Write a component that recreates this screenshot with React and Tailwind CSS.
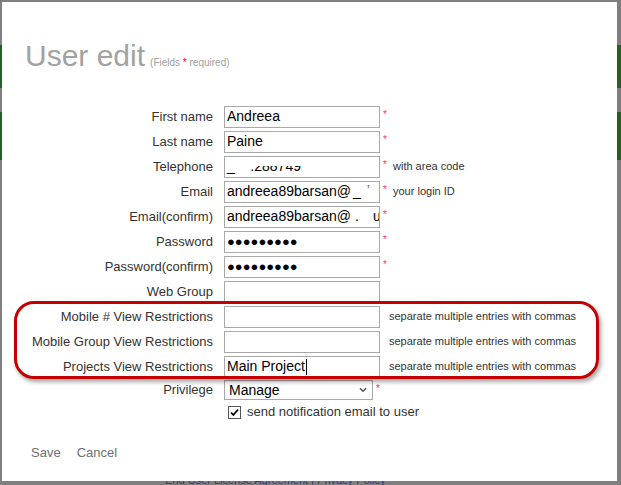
import React from 'react';

const font = { fontFamily: '"Liberation Sans", Arial, sans-serif' };

const Star = () => (
  <span className="ml-[3px] w-[4px] text-[10px] leading-none text-[#ef4069] self-center -mt-[3px]">*</span>
);

const Field = ({ children, required, hint, overlay }) => (
  <div className="flex items-center">
    <div className="relative w-[156px] h-[22px] border border-[#a9a9a9] bg-white px-[2px] flex items-center overflow-hidden text-[14px] text-black whitespace-nowrap">
      {children}
      {overlay}
    </div>
    {required && <Star />}
    {hint && (
      <span className={`${required ? 'ml-[6px]' : 'ml-[9px]'} text-[11px] text-[#333] whitespace-nowrap`}>{hint}</span>
    )}
  </div>
);

const Row = ({ label, h = 'h-[25px]', children }) => (
  <div className={`flex items-center ${h}`}>
    <div className="w-[211px] text-right text-[13px] text-[#333] whitespace-nowrap">{label}</div>
    <div className="ml-[11px]">{children}</div>
  </div>
);

const Dots = () => <span className="text-[13px]">●●●●●●●●●</span>;

const SideStrip = () => (
  <div className="flex flex-col">
    <div className="h-[43px]" />
    <div className="h-[43px] bg-[#245f24]" />
    <div className="h-[24px]" />
    <div className="h-[48px] bg-[#245f24]" />
  </div>
);

export default function App() {
  return (
    <div className="relative w-[621px] h-[485px] bg-[#7f7f7f] overflow-hidden flex flex-col" style={font}>
      <div className="h-[2px] shrink-0" />
      <div className="flex h-[479px] shrink-0">
        <div className="w-[2px]"><SideStrip /></div>
        <div className="w-[615px] bg-white flex flex-col">
          {/* Title */}
          <div className="mt-[39px] pl-[23px] flex items-baseline">
            <span className="text-[30px] leading-[30px] text-[#a2a2a2]">User edit</span>
            <span className="ml-[5px] text-[10px] text-[#a0a0a0]">
              (Fields <span className="text-[#e00]">*</span> required)
            </span>
          </div>

          {/* Form */}
          <div className="mt-[33px] flex flex-col">
            <Row label="First name"><Field required>Andreea</Field></Row>
            <Row label="Last name"><Field required>Paine</Field></Row>
            <Row label="Telephone">
              <Field
                required
                hint="with area code"
                overlay={<div className="absolute left-0 top-0 w-[150px] h-[9px] bg-white" />}
              >
                <span>_&nbsp;&nbsp;&nbsp;&nbsp;.288749</span>
              </Field>
            </Row>
            <Row label="Email">
              <Field required hint="your login ID">
                andreea89barsan@<span className="ml-[2px]">_</span>
                <span className="ml-[6px] text-[#666]">ʼ</span>
                <span className="ml-[8px] text-[#7a2020]">ı</span>
              </Field>
            </Row>
            <Row label="Email(confirm)">
              <Field required>
                andreea89barsan@<span className="ml-[4px]">.</span>
                <span className="ml-[14px]">ui</span>
              </Field>
            </Row>
            <Row label="Password"><Field required><Dots /></Field></Row>
            <Row label="Password(confirm)"><Field required><Dots /></Field></Row>
            <Row label="Web Group"><Field /></Row>
            <Row label="Mobile # View Restrictions">
              <Field hint="separate multiple entries with commas" />
            </Row>
            <Row label="Mobile Group View Restrictions">
              <Field hint="separate multiple entries with commas" />
            </Row>
            <Row label="Projects View Restrictions">
              <Field hint="separate multiple entries with commas">
                Main Project<span className="inline-block w-[1px] h-[16px] bg-black ml-[1px]" />
              </Field>
            </Row>
            <Row label="Privilege" h="h-[22px]">
              <div className="flex items-center">
                <div className="w-[149px] h-[20px] border border-[#a9a9a9] flex items-center justify-between pl-[4px] pr-[5px] text-[14px] text-black">
                  <span>Manage</span>
                  <svg width="8" height="6" viewBox="0 0 8 6">
                    <path d="M1 1.2L4 4.2L7 1.2" fill="none" stroke="#555" strokeWidth="1.6" />
                  </svg>
                </div>
                <Star />
              </div>
            </Row>
            <Row label="" h="h-[22px]">
              <div className="flex items-center pl-[4px]">
                <div className="w-[13px] h-[13px] border border-[#555] bg-white flex items-center justify-center">
                  <svg width="9" height="9" viewBox="0 0 9 9">
                    <path d="M1 4.5L3.4 7L8 1.5" fill="none" stroke="#000" strokeWidth="1.8" />
                  </svg>
                </div>
                <span className="ml-[6px] text-[13px] text-[#333] whitespace-nowrap">send notification email to user</span>
              </div>
            </Row>
          </div>

          {/* Actions */}
          <div className="mt-[22px] pl-[29px] flex items-center text-[13px] leading-[16px] text-[#6f6f6f]">
            <span>Save</span>
            <span className="ml-[16px]">Cancel</span>
          </div>
        </div>
        <div className="w-[4px]"><SideStrip /></div>
      </div>
      <div className="h-[4px] shrink-0 overflow-hidden">
        <div className="pl-[165px] -mt-[7px] text-[11px] leading-[12px] text-[#2d3e86] whitespace-nowrap">
          End User License Agreement | Privacy Policy
        </div>
      </div>

      {/* annotation highlight */}
      <div className="absolute left-[14px] top-[301px] w-[585px] h-[78px] border-[3px] border-[#c40000] rounded-[20px] shadow-[2px_3px_4px_rgba(0,0,0,0.35)] pointer-events-none" />
    </div>
  );
}
